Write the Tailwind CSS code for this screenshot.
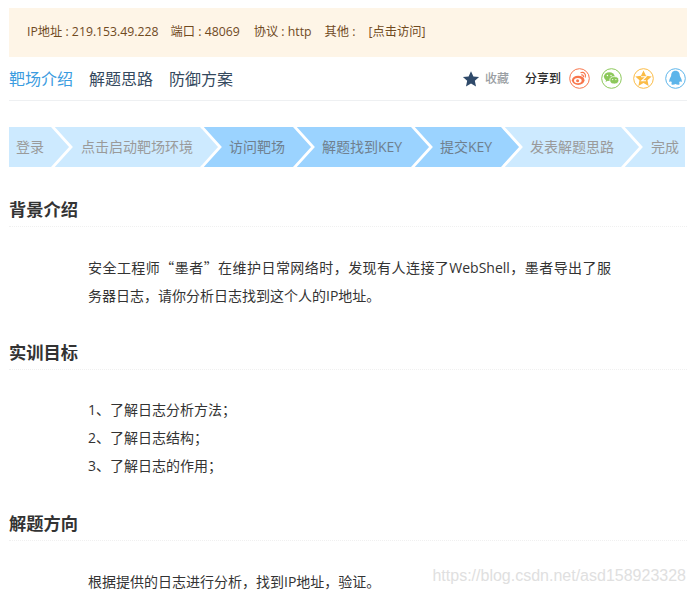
<!doctype html>
<html lang="zh">
<head>
<meta charset="utf-8">
<script src="https://cdn.jsdelivr.net/npm/@tailwindcss/browser@4"></script>
</head>
<body class="bg-white font-['Open_Sans','Noto_Sans_CJK_SC',sans-serif] overflow-hidden">
<div class="relative h-[594px] w-[695px] overflow-hidden pt-2 pl-[9px] pr-2">
  <div class="flex h-[49px] items-center bg-[#fef5e7] pl-[18px] text-[12.25px] text-[#704a1e]">
    <span>IP地址 : 219.153.49.228</span><span class="ml-[12px]">端口 : 48069</span><span class="ml-[14px]">协议 : http</span><span class="ml-[13px]">其他 :</span><span class="ml-[13px]">[点击访问]</span>
  </div>
  <div class="flex h-[44px] items-center border-b border-[#eef0f2]">
    <span class="text-base text-[#3b9ce0]">靶场介绍</span>
    <span class="ml-4 text-base text-[#34495e]">解题思路</span>
    <span class="ml-4 text-base text-[#34495e]">防御方案</span>
    <div class="ml-auto flex items-center pr-px">
      <svg class="h-[18px] w-[18px] text-[#2f4a6a]" viewBox="0 0 24 24" fill="currentColor"><path d="M12 1.500l3.200 7 7.600.8-5.700 5.100 1.600 7.500L12 18l-6.700 3.900 1.600-7.500L1.200 9.300l7.600-.8z"/></svg>
      <span class="ml-[5px] text-xs font-medium text-[#9a9ea3]">收藏</span>
      <span class="ml-4 text-xs font-medium text-[#2b2b2b]">分享到</span>
      <svg class="ml-[8px] h-[21px] w-[21px]" viewBox="0 0 21 21"><circle cx="10.500" cy="10.500" r="9.800" fill="#fff" stroke="#f8764c" stroke-width="1"/><ellipse cx="9.200" cy="12.300" rx="6.300" ry="4.600" fill="#f8764c"/><ellipse cx="8.800" cy="12.600" rx="3.800" ry="2.700" fill="#fff"/><circle cx="8.600" cy="12.800" r="1.500" fill="#f8764c"/><path d="M11.500 4.800c3.500-1.200 5.800 1.200 4.700 4.700M12.200 7c1.700-.4 2.600.6 2.100 2.200" fill="none" stroke="#f8764c" stroke-width="1.200"/></svg>
      <svg class="ml-[11px] h-[21px] w-[21px]" viewBox="0 0 21 21"><circle cx="10.500" cy="10.500" r="9.800" fill="#fff" stroke="#8cc85a" stroke-width="1"/><ellipse cx="8.300" cy="8.600" rx="5.400" ry="4.400" fill="#8cc85a"/><path d="M5.200 11.500l-.6 2.400 2.600-1.400z" fill="#8cc85a"/><ellipse cx="13.300" cy="12.300" rx="4.500" ry="3.700" fill="#8cc85a" stroke="#fff" stroke-width=".8"/><circle cx="6.400" cy="7.500" r=".7" fill="#fff"/><circle cx="10" cy="7.500" r=".7" fill="#fff"/><circle cx="11.700" cy="11.600" r=".6" fill="#fff"/><circle cx="14.900" cy="11.600" r=".6" fill="#fff"/></svg>
      <svg class="ml-[11px] h-[21px] w-[21px]" viewBox="0 0 21 21"><circle cx="10.500" cy="10.500" r="9.800" fill="#fff" stroke="#fbbb45" stroke-width="1"/><path d="M10.500 2.600l2.500 5.200 5.700.7-4.200 3.800 1.100 5.600-5.100-2.800-5.100 2.800 1.100-5.600-4.200-3.800 5.700-.7z" fill="#fbbb45"/><path d="M8 8.800h5l-4.300 4h4.300" fill="none" stroke="#fff" stroke-width="1.100"/></svg>
      <svg class="ml-[11px] h-[21px] w-[21px]" viewBox="0 0 21 21"><circle cx="10.500" cy="10.500" r="9.800" fill="#fff" stroke="#5db5ea" stroke-width="1"/><path d="M10.500 2.800c3 0 4.300 2.300 4.300 4.800 0 1 2 3.300 2 5.400 0 1.600-1.100 1.100-1.800 0-.2 1-.6 1.600-1.100 2.100.8.300 1.100 1 .4 1.400-1.100.5-2.700.1-3.800-.4-1.100.5-2.700.9-3.800.4-.7-.4-.4-1.100.4-1.400-.5-.5-.9-1.100-1.100-2.100-.7 1.100-1.800 1.600-1.800 0 0-2.100 2-4.400 2-5.400 0-2.500 1.300-4.800 4.300-4.800z" fill="#5db5ea"/></svg>
    </div>
  </div>
  <ol class="mt-[26px] flex h-10 w-[676px] text-sm leading-10">
    <li class="relative w-[44px] bg-[#cdeaff] pl-[7px] text-[#9a9a9a]">登录
      <svg class="absolute top-0 -right-[22px] z-10 h-10 w-[24px]" viewBox="0 0 24 40"><path d="M0 0L19 20L0 40Z" fill="#cdeaff"/><path d="M1 -1L20 20L1 41" fill="none" stroke="#fff" stroke-width="2.800"/></svg>
    </li>
    <li class="relative w-[149px] bg-[#cdeaff] pl-[28px] text-[#9a9a9a]">点击启动靶场环境
      <svg class="absolute top-0 -right-[22px] z-10 h-10 w-[24px]" viewBox="0 0 24 40"><path d="M0 0L19 20L0 40Z" fill="#cdeaff"/><path d="M1 -1L20 20L1 41" fill="none" stroke="#fff" stroke-width="2.800"/></svg>
    </li>
    <li class="relative w-[93px] bg-[#9bd3ff] pl-[27px] text-[#6f7f8e]">访问靶场
      <svg class="absolute top-0 -right-[22px] z-10 h-10 w-[24px]" viewBox="0 0 24 40"><path d="M0 0L19 20L0 40Z" fill="#9bd3ff"/><path d="M1 -1L20 20L1 41" fill="none" stroke="#fff" stroke-width="2.800"/></svg>
    </li>
    <li class="relative w-[118px] bg-[#9bd3ff] pl-[27px] text-[#6f7f8e]">解题找到KEY
      <svg class="absolute top-0 -right-[22px] z-10 h-10 w-[24px]" viewBox="0 0 24 40"><path d="M0 0L19 20L0 40Z" fill="#9bd3ff"/><path d="M1 -1L20 20L1 41" fill="none" stroke="#fff" stroke-width="2.800"/></svg>
    </li>
    <li class="relative w-[90px] bg-[#9bd3ff] pl-[27px] text-[#6f7f8e]">提交KEY
      <svg class="absolute top-0 -right-[22px] z-10 h-10 w-[24px]" viewBox="0 0 24 40"><path d="M0 0L19 20L0 40Z" fill="#9bd3ff"/><path d="M1 -1L20 20L1 41" fill="none" stroke="#fff" stroke-width="2.800"/></svg>
    </li>
    <li class="relative w-[120px] bg-[#cdeaff] pl-[27px] text-[#9a9a9a]">发表解题思路
      <svg class="absolute top-0 -right-[22px] z-10 h-10 w-[24px]" viewBox="0 0 24 40"><path d="M0 0L19 20L0 40Z" fill="#cdeaff"/><path d="M1 -1L20 20L1 41" fill="none" stroke="#fff" stroke-width="2.800"/></svg>
    </li>
    <li class="flex-1 bg-[#cdeaff] pl-[28px] text-[#9a9a9a]">完成</li>
  </ol>
  <h2 class="mt-[27px] h-[33px] border-b border-dotted border-[#f0f0f0] text-[17.250px] font-bold leading-[32px] text-[#333]">背景介绍</h2>
  <div class="mt-[27px] w-[602px] pl-[79px] text-sm leading-[28px] text-[#333]">
    <p class="h-[28px] overflow-hidden text-justify [text-align-last:justify]">安全工程师<span class="font-['Noto_Sans_CJK_SC'] leading-none">“</span>墨者<span class="font-['Noto_Sans_CJK_SC'] leading-none">”</span>在维护日常网络时，发现有人连接了WebShell，墨者导出了服</p>
    <p class="h-[28px]">务器日志，请你分析日志找到这个人的IP地址。</p>
  </div>
  <h2 class="mt-[27px] h-[33px] border-b border-dotted border-[#f0f0f0] text-[17.250px] font-bold leading-[32px] text-[#333]">实训目标</h2>
  <div class="mt-[26px] pl-[79px] text-sm leading-[28px] text-[#333]">
    <p>1、了解日志分析方法；</p>
    <p>2、了解日志结构；</p>
    <p>3、了解日志的作用；</p>
  </div>
  <h2 class="mt-[28px] h-[33px] border-b border-dotted border-[#f0f0f0] text-[17.250px] font-bold leading-[32px] text-[#333]">解题方向</h2>
  <div class="mt-[27px] pl-[79px] text-sm leading-[28px] text-[#333]">
    <p>根据提供的日志进行分析，找到IP地址，验证。</p>
  </div>
  <span class="absolute right-[9px] bottom-[8px] font-['Liberation_Sans',sans-serif] text-[16px] leading-[20px] text-[#e0e0e0]">https://blog.csdn.net/asd158923328</span>
</div>
</body>
</html>
